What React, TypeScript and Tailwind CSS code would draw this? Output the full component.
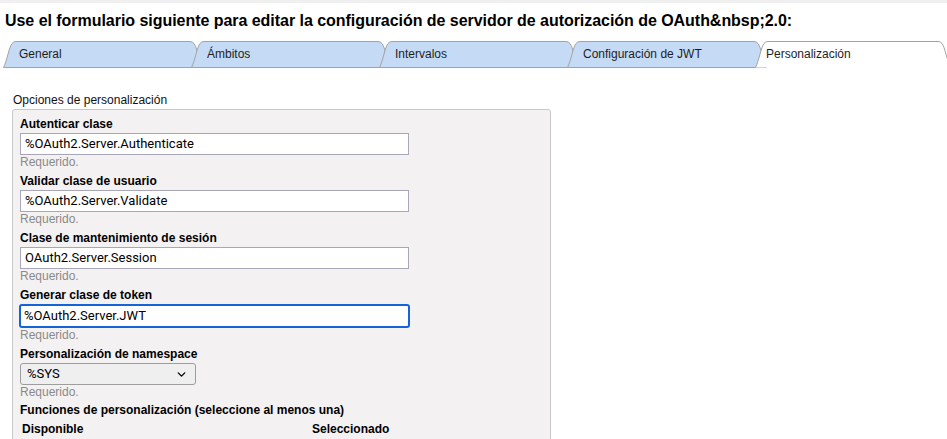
import { ChevronDown } from "lucide-react";

const tabs = [
  { label: "General", active: false },
  { label: "Ámbitos", active: false },
  { label: "Intervalos", active: false },
  { label: "Configuración de JWT", active: false },
  { label: "Personalización", active: true },
];

function Tab({ label, active, first }: { label: string; active: boolean; first: boolean }) {
  const w = active ? 196 : 200;
  const shape = `M0.5,26.5 C4,20 6,6 9,2.5 Q10.5,0.5 13,0.5 L${w - 13},0.5 Q${w - 10.5},0.5 ${w - 9},2.5 C${w - 6},6 ${w - 4},20 ${w - 0.5},26.5`;
  return (
    <div
      className={`relative h-[27px] shrink-0 ${first ? "" : "-ml-[12px]"}`}
      style={{ width: w }}
    >
      <svg className="absolute inset-0" width={w} height={27}>
        <path d={shape + " Z"} fill={active ? "#ffffff" : "#c5daf5"} stroke="none" />
        <path d={active ? shape : shape + " Z"} fill="none" stroke="#a3a3a3" strokeWidth={1} />
      </svg>
      <span
        className={`relative block leading-[27px] text-[12px] text-[#1e1e1e] ${active ? "pl-[11px]" : "pl-[16px]"}`}
      >
        {label}
      </span>
    </div>
  );
}

function TextField({
  label,
  value,
  focused = false,
}: {
  label: string;
  value: string;
  focused?: boolean;
}) {
  return (
    <div className="mb-[4px]">
      <div className="font-bold text-[12px] leading-[17px] text-black">{label}</div>
      {focused ? (
        <div className="-mx-[1px] h-[24px] w-[391px] rounded-[3px] border-2 border-[#1463d8] bg-white pl-[3px] text-[13px] leading-[20px] text-black [font-family:Roboto,sans-serif]">
          {value}
        </div>
      ) : (
        <div className="h-[22px] w-[389px] border border-[#a7a7b8] bg-white pl-[4px] text-[13px] leading-[20px] text-black [font-family:Roboto,sans-serif]">
          {value}
        </div>
      )}
      <div className="text-[12px] leading-[14px] text-[#8a8a8a]">Requerido.</div>
    </div>
  );
}

export default function App() {
  return (
    <div className="h-[439px] w-[947px] overflow-hidden bg-white [font-family:'Liberation_Sans',Arial,sans-serif]">
      <div className="h-[3px] bg-[#efefef]" />
      <h1 className="mt-[8px] pl-[5px] text-[16px] font-bold leading-[19px] tracking-[-0.04px] text-black">
        Use el formulario siguiente para editar la configuración de servidor de autorización de OAuth&amp;nbsp;2.0:
      </h1>

      <div className="mt-[11px] flex pl-[3px]">
        {tabs.map((t, i) => (
          <Tab key={t.label} label={t.label} active={t.active} first={i === 0} />
        ))}
      </div>

      <div className="mt-[25px] pl-[13px] text-[12px] leading-[14px] text-[#111]">
        Opciones de personalización
      </div>

      <div className="ml-[12px] mt-[2px] h-[400px] w-[539px] rounded-[3px] border border-[#c9c9c9] bg-[#f3f1f2] px-[7px] pt-[6px]">
        <TextField label="Autenticar clase" value="%OAuth2.Server.Authenticate" />
        <TextField label="Validar clase de usuario" value="%OAuth2.Server.Validate" />
        <TextField label="Clase de mantenimiento de sesión" value="OAuth2.Server.Session" />
        <TextField label="Generar clase de token" value="%OAuth2.Server.JWT" focused />

        <div className="mb-[3px]">
          <div className="font-bold text-[12px] leading-[17px] text-black">Personalización de namespace</div>
          <div className="flex h-[22px] w-[176px] items-center justify-between rounded-[3px] border border-[#9d9d9d] bg-[#efefef] pl-[6px] pr-[7px] text-[13px] text-black [font-family:Roboto,sans-serif]">
            <span>%SYS</span>
            <ChevronDown size={13} strokeWidth={2.5} />
          </div>
          <div className="text-[12px] leading-[14px] text-[#8a8a8a]">Requerido.</div>
        </div>

        <div className="font-bold text-[12px] leading-[17px] text-black">
          Funciones de personalización (seleccione al menos una)
        </div>
        <div className="mt-[2px] flex pl-[2px] font-bold text-[12px] leading-[17px] text-black">
          <span className="w-[290px]">Disponible</span>
          <span>Seleccionado</span>
        </div>
      </div>
    </div>
  );
}
